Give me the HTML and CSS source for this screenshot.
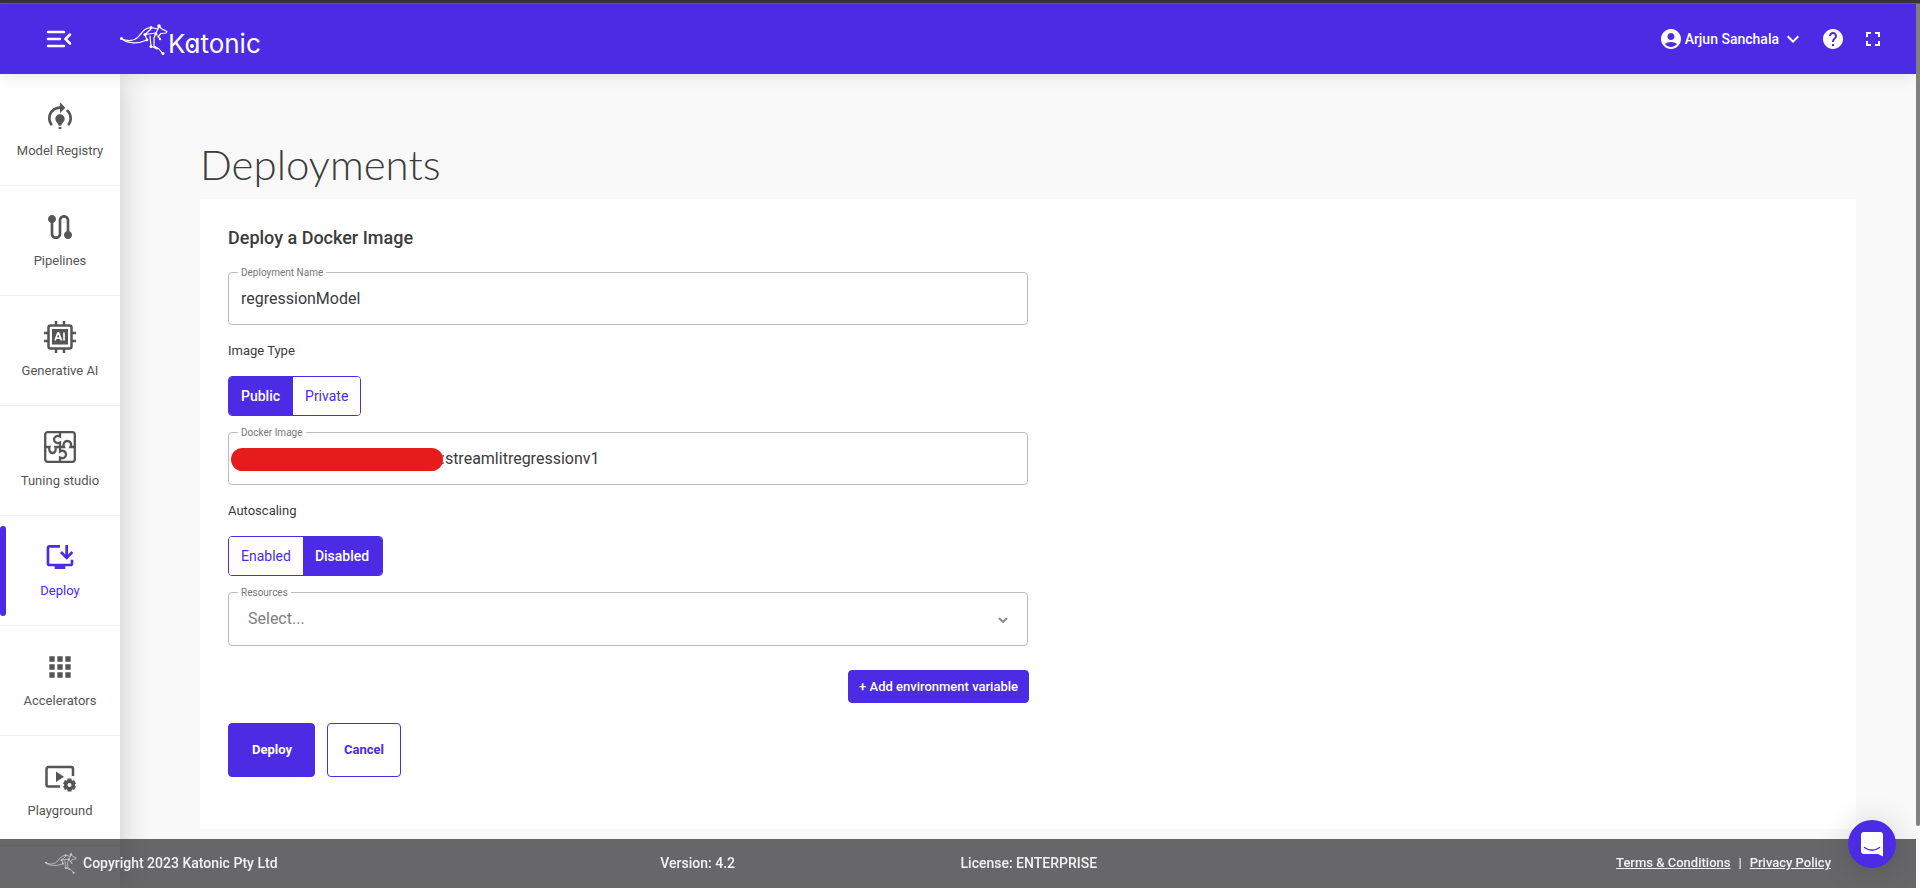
FILE: index.html
```html
<!DOCTYPE html>
<html lang="en">
<head>
<meta charset="utf-8">
<meta name="viewport" content="width=device-width, initial-scale=1">
<title>Katonic - Deployments</title>
<link rel="stylesheet" href="styles.css">
</head>
<body>
<svg class="defs" aria-hidden="true">
  <symbol id="kangaroo" viewBox="0 0 48 32">
    <g fill="none" stroke="currentColor" stroke-width="1.200" stroke-linecap="round" stroke-linejoin="round">
      <path d="M1 15.500C8 19 15 18 19 13S25 5 31 4.500L38 6"/>
      <path d="M1 15.500C8 21 18 21 27 17"/>
      <path d="M36 10L25 11.500L27 17M25 11.500L31 6"/>
      <path d="M36 10L39 3.500L42 6L47 8.500L46 10L41 10.500L38 14"/>
      <path d="M36 10L34 15L34 23L39 26L43 31M30 13L31 23L37 26M38 13L40 16"/>
    </g>
    <g fill="currentColor"><circle cx="1.500" cy="15.500" r="1.500"/><circle cx="31" cy="4.500" r="1.500"/><circle cx="39" cy="3" r="1.800"/><circle cx="25" cy="11.500" r="1.600"/><circle cx="27" cy="17" r="1.400"/><circle cx="36" cy="11" r="1.500"/><circle cx="31" cy="23.500" r="1.500"/><circle cx="43" cy="30.500" r="1.500"/><circle cx="40" cy="16" r="1.200"/></g>
  </symbol>
</svg>
<div class="window-edge"></div>
<header class="topbar">
  <button class="icon-button menu" type="button" aria-label="Collapse menu">
    <svg width="28" height="24" viewBox="0 0 28 24" fill="none" stroke="currentColor" stroke-width="2.500" stroke-linecap="round"><path d="M3 5H19M3 12H15M3 19H19"/><path d="M25 7.500L20.500 12L25 16.500"/></svg>
  </button>
  <a class="brand" href="#" aria-label="Katonic home">
    <svg class="brand-mark" width="48" height="32"><use href="#kangaroo"/></svg>
    <span class="brand-name">K<span class="brand-a">a</span>tonic</span>
  </a>
  <div class="tools">
    <button class="user" type="button">
      <svg width="24" height="24" viewBox="0 0 24 24" fill="currentColor"><path d="M12 2C6.480 2 2 6.480 2 12s4.480 10 10 10 10-4.480 10-10S17.520 2 12 2zm0 4c1.930 0 3.500 1.570 3.500 3.500S13.930 13 12 13s-3.500-1.570-3.500-3.500S10.070 6 12 6zm0 14c-2.030 0-4.430-.82-6.140-2.880C7.550 15.800 9.680 15 12 15s4.450.8 6.140 2.120C16.430 19.180 14.030 20 12 20z"/></svg>
      <span>Arjun Sanchala</span>
      <svg width="24" height="24" viewBox="0 0 24 24" fill="currentColor"><path d="M7.410 8.590 12 13.170l4.590-4.580L18 10l-6 6-6-6 1.410-1.410z"/></svg>
    </button>
    <button class="icon-button" type="button" aria-label="Help">
      <svg width="24" height="24" viewBox="0 0 24 24" fill="currentColor"><path d="M12 2C6.480 2 2 6.480 2 12s4.480 10 10 10 10-4.480 10-10S17.520 2 12 2zm1 17h-2v-2h2v2zm2.070-7.750-.9.920C13.450 12.900 13 13.500 13 15h-2v-.5c0-1.100.45-2.100 1.170-2.830l1.240-1.260c.37-.36.59-.86.59-1.410 0-1.100-.9-2-2-2s-2 .9-2 2H8c0-2.210 1.790-4 4-4s4 1.790 4 4c0 .88-.36 1.680-.93 2.250z"/></svg>
    </button>
    <button class="icon-button" type="button" aria-label="Full screen">
      <svg width="24" height="24" viewBox="0 0 24 24" fill="currentColor"><path d="M7 14H5v5h5v-2H7v-3zm-2-4h2V7h3V5H5v5zm12 7h-3v2h5v-5h-2v3zM14 5v2h3v3h2V5h-5z"/></svg>
    </button>
  </div>
</header>

<div class="shell">
  <nav class="sidebar" aria-label="Main">
    <a class="nav-item" href="#">
      <svg viewBox="0 0 24 24" fill="currentColor"><path d="M15.500 13.500c0 2-2.500 3.500-2.500 5h-2c0-1.500-2.500-3-2.500-5 0-1.930 1.570-3.500 3.500-3.500s3.500 1.570 3.500 3.500zm-2.500 6h-2V21h2v-1.500zm6-6.500c0 1.680-.59 3.210-1.580 4.420l1.420 1.420C20.180 17.270 21 15.230 21 13c0-2.740-1.230-5.190-3.160-6.840l-1.420 1.420C17.990 8.860 19 10.820 19 13zm-3-8-4-4v3c-4.970 0-9 4.030-9 9 0 2.230.82 4.270 2.160 5.840l1.420-1.420C5.590 16.210 5 14.680 5 13c0-3.860 3.140-7 7-7v3l4-4z"/></svg>
      <span>Model Registry</span>
    </a>
    <a class="nav-item" href="#">
      <svg viewBox="0 0 24 24" fill="currentColor"><path d="M19 15.180V7c0-2.210-1.790-4-4-4s-4 1.790-4 4v10c0 1.100-.9 2-2 2s-2-.9-2-2V8.820C8.160 8.400 9 7.300 9 6c0-1.660-1.340-3-3-3S3 4.340 3 6c0 1.300.84 2.400 2 2.820V17c0 2.210 1.790 4 4 4s4-1.790 4-4V7c0-1.100.9-2 2-2s2 .9 2 2v8.180c-1.160.41-2 1.510-2 2.820 0 1.660 1.340 3 3 3s3-1.340 3-3c0-1.300-.84-2.400-2-2.820z"/></svg>
      <span>Pipelines</span>
    </a>
    <a class="nav-item" href="#">
      <svg viewBox="0 0 32 32" fill="none" stroke="currentColor" stroke-width="2"><rect x="4.500" y="4.500" width="23" height="23" rx="2" stroke-width="2.500"/><path d="M12 0V4M20 0V4M12 28V32M20 28V32M0 12H4M0 20H4M28 12H32M28 20H32" stroke-width="2.500"/><rect x="8" y="8" width="16" height="15.500" fill="currentColor" stroke="none"/><path d="M11 19.500L13.800 12H14.700L17.500 19.500M12.200 17.200H16.300M20 11.500V19.500" stroke="#fff" stroke-width="1.700"/></svg>
      <span>Generative AI</span>
    </a>
    <a class="nav-item" href="#">
      <svg viewBox="0 0 32 32" fill="none" stroke="currentColor" stroke-width="2.300"><rect x="1.200" y="1.200" width="29.600" height="29.600" rx="2.500"/><path d="M16 1V5.500C13 4 10 6 10 8.500S13 13 16 11.500V20.500C19 18.500 22 20.500 22 23.500S19 28 16 26.500V31M1 16H5.500C4.500 19 6 22 8.500 22S12.500 19 11.500 16H20C18.500 13 20.500 10 23.500 10S28 13 26.500 16H31"/></svg>
      <span>Tuning studio</span>
    </a>
    <a class="nav-item active" href="#" aria-current="page">
      <svg viewBox="0 0 24 24" fill="currentColor"><path d="M20 17H4V5h8V3H4c-1.110 0-2 .89-2 2v12c0 1.100.89 2 2 2h4v2h8v-2h4c1.100 0 2-.9 2-2v-3h-2v3z"/><path d="M17 14l5-5-1.410-1.410L18 10.170V3h-2v7.170l-2.590-2.580L12 9z"/></svg>
      <span>Deploy</span>
    </a>
    <a class="nav-item" href="#">
      <svg viewBox="0 0 24 24" fill="currentColor"><path d="M4 8h4V4H4v4zm6 12h4v-4h-4v4zm-6 0h4v-4H4v4zm0-6h4v-4H4v4zm6 0h4v-4h-4v4zm6-10v4h4V4h-4zm-6 4h4V4h-4v4zm6 6h4v-4h-4v4zm0 6h4v-4h-4v4z"/></svg>
      <span>Accelerators</span>
    </a>
    <a class="nav-item" href="#">
      <svg viewBox="0 0 32 32" fill="none" stroke="currentColor" stroke-width="2.500"><path d="M16 25.500H4.500A2 2 0 0 1 2.500 23.500V8A2 2 0 0 1 4.500 6H27A2 2 0 0 1 29 8V15"/><path d="M12 10.500L20 15.800L12 21Z" fill="currentColor" stroke="none"/><circle cx="25.500" cy="24" r="3.700" stroke-width="3.400"/><g stroke-width="4"><path d="M25.500 17.500V20M25.500 28V30.500M20 20.800L22 22M29 26L31 27.200M20 27.200L22 26M29 22L31 20.800"/></g></svg>
      <span>Playground</span>
    </a>
  </nav>

  <main class="content">
    <h1>Deployments</h1>
    <form class="card">
      <h2>Deploy a Docker Image</h2>
      <div class="field">
        <label for="name">Deployment Name</label>
        <input id="name" type="text" value="regressionModel">
      </div>
      <p class="caption" id="image-type">Image Type</p>
      <div class="toggle" role="group" aria-labelledby="image-type">
        <button type="button" aria-pressed="true">Public</button>
        <button type="button" aria-pressed="false">Private</button>
      </div>
      <div class="field redacted">
        <label for="image">Docker Image</label>
        <input id="image" type="text" value=":streamlitregressionv1">
        <span class="redaction"></span>
      </div>
      <p class="caption" id="autoscaling">Autoscaling</p>
      <div class="toggle" role="group" aria-labelledby="autoscaling">
        <button type="button" aria-pressed="false">Enabled</button>
        <button type="button" aria-pressed="true">Disabled</button>
      </div>
      <div class="field">
        <label for="resources">Resources</label>
        <select id="resources"><option>Select...</option></select>
        <svg class="caret" width="10" height="6" viewBox="0 0 10 6" fill="none" stroke="currentColor" stroke-width="2"><path d="M1 1L5 5L9 1"/></svg>
      </div>
      <div class="add-row"><button class="add" type="button">+ Add environment variable</button></div>
      <div class="actions">
        <button class="submit" type="submit">Deploy</button>
        <button class="cancel" type="button">Cancel</button>
      </div>
    </form>
  </main>
</div>

<footer class="footer">
  <div class="copyright"><svg width="32" height="22"><use href="#kangaroo"/></svg><span>Copyright 2023 Katonic Pty Ltd</span></div>
  <span>Version: 4.2</span>
  <span>License: ENTERPRISE</span>
  <div class="legal"><a href="#">Terms &amp; Conditions</a><span>|</span><a href="#">Privacy Policy</a></div>
</footer>
<button class="chat" type="button" aria-label="Open chat">
  <svg width="22" height="25" viewBox="0 0 22 25"><path d="M3 0H19A3 3 0 0 1 22 3V24.500L17 22H3A3 3 0 0 1 0 19V3A3 3 0 0 1 3 0Z" fill="#fff"/><path d="M3.500 15.500Q11 21 18.500 15.500" fill="none" stroke="#4b2be3" stroke-width="1.400" stroke-linecap="round"/></svg>
</button>
<div class="scroll-track"><div class="scroll-thumb"></div></div>
</body>
</html>
```
FILE: styles.css
```css
:root {
  --purple: #4b2be3;
  --ink: #3b3b3d;
  --grey: #555;
}

* { box-sizing: border-box; }

body {
  margin: 0;
  padding-right: 4px;
  min-height: 100vh;
  display: flex;
  flex-direction: column;
  background: #f9f9f9;
  color: var(--ink);
  font-family: Roboto, "Liberation Sans", sans-serif;
  font-size: 14px;
}

button, input, select { font: inherit; }
button { cursor: pointer; }
a { color: inherit; }

.defs { position: absolute; width: 0; height: 0; }

.window-edge {
  height: 4px;
  margin-right: -4px;
  background: #363639;
  border-bottom: 1px solid #626262;
}

.topbar {
  position: relative;
  z-index: 2;
  display: flex;
  align-items: center;
  height: 70px;
  padding: 0 31px 0 45px;
  background: var(--purple);
  color: #fff;
  box-shadow: 0 2px 16px rgba(0, 0, 0, 0.1);
}

.icon-button, .user {
  display: flex;
  align-items: center;
  padding: 0;
  border: 0;
  background: none;
  color: inherit;
}

.brand {
  display: flex;
  align-items: center;
  margin-left: 47px;
  text-decoration: none;
}

.brand-name {
  margin-top: 10px;
  font: 400 26px/32px Inter, Lato, sans-serif;
  font-feature-settings: "cv11";
}

.brand-a { position: relative; }

.brand-a::after {
  content: "";
  position: absolute;
  left: 6px;
  top: 16px;
  width: 4px;
  height: 4px;
  border-radius: 50%;
  background: #fff;
}

.tools {
  display: flex;
  align-items: center;
  gap: 16px;
  margin-left: auto;
}

.user { gap: 2px; font-weight: 500; }

.shell { flex: 1; display: flex; }

.sidebar {
  flex: 0 0 120px;
  padding-top: 2px;
  background: #fff;
  box-shadow: 0 0 30px rgba(0, 0, 0, 0.2);
}

.nav-item {
  position: relative;
  display: flex;
  flex-direction: column;
  align-items: center;
  gap: 10px;
  height: 110px;
  padding-top: 25px;
  border-bottom: 1px solid #f0f0f0;
  color: var(--grey);
  font-size: 13px;
  line-height: 16px;
  text-decoration: none;
}

.nav-item svg { width: 32px; height: 32px; }

.nav-item.active { color: var(--purple); }

.nav-item.active::before {
  content: "";
  position: absolute;
  left: 0;
  top: 10px;
  bottom: 9px;
  width: 6px;
  border-radius: 3px;
  background: var(--purple);
}

.content { flex: 1; padding: 64px 60px 59px 80px; }

h1 {
  margin: 0;
  font: 300 42px/52px Lato, sans-serif;
  padding-bottom: 9px;
}

.card {
  padding: 27px 28px 52px;
  background: #fff;
}

h2 {
  margin: 0 0 22px;
  font-size: 18px;
  line-height: 24px;
  font-weight: 500;
}

.field { position: relative; max-width: 800px; }

.field label {
  position: absolute;
  left: 10px;
  top: -5px;
  padding: 0 3px;
  background: #fff;
  color: #777;
  font-size: 10px;
  line-height: 12px;
}

.field input, .field select {
  display: block;
  width: 100%;
  height: 53px;
  padding: 0 12px;
  border: 1px solid #bdbdbd;
  border-radius: 4px;
  background: none;
  color: var(--ink);
  font-size: 16px;
}

.field select {
  appearance: none;
  height: 54px;
  padding: 0 19px 2px;
  color: #808080;
}

.redacted input { padding-left: 212px; }

.redaction {
  position: absolute;
  left: 3px;
  top: 16px;
  width: 212px;
  height: 23px;
  border-radius: 12px;
  background: #e61c1c;
}

.caret {
  position: absolute;
  right: 20px;
  top: 25px;
  color: #8a8a8a;
}

.caption {
  margin: 18px 0;
  font-size: 13px;
  line-height: 15px;
}

.toggle {
  display: flex;
  width: fit-content;
  margin-bottom: 16px;
  border: 1px solid var(--purple);
  border-radius: 4px;
  overflow: hidden;
}

.toggle button {
  height: 38px;
  padding: 0 12px;
  border: 0;
  background: #fff;
  color: var(--purple);
}

.toggle button[aria-pressed="true"] {
  padding-right: 13px;
  background: var(--purple);
  color: #fff;
  font-weight: 500;
}

.add-row {
  display: flex;
  justify-content: flex-end;
  max-width: 801px;
  margin: 24px 0 20px;
}

.add, .submit, .cancel {
  border: 1px solid var(--purple);
  border-radius: 4px;
  background: var(--purple);
  color: #fff;
  font-size: 13px;
  font-weight: 500;
}

.add { height: 33px; padding: 0 10px; }

.actions { display: flex; gap: 12px; }

.submit { height: 54px; padding: 0 22px 2px 23px; font-weight: 700; }

.cancel {
  height: 54px;
  padding: 0 16px 2px;
  background: #fff;
  color: var(--purple);
  font-weight: 700;
}

.footer {
  position: fixed;
  z-index: 3;
  left: 0;
  right: 4px;
  bottom: 0;
  display: grid;
  grid-template-columns: 41fr 20fr 29fr 29fr;
  align-items: center;
  height: 49px;
  padding: 0 85px 2px 45px;
  background: rgba(25, 25, 28, 0.65);
  color: #f2f2f2;
  font-weight: 500;
}

.copyright { display: flex; align-items: center; gap: 6px; }
.copyright svg { color: #ccc; }

.legal {
  display: flex;
  justify-content: flex-end;
  gap: 8px;
  font-size: 13px;
}

.chat {
  position: fixed;
  z-index: 4;
  right: 24px;
  bottom: 20px;
  display: flex;
  align-items: center;
  justify-content: center;
  width: 48px;
  height: 48px;
  padding: 0;
  border: 0;
  border-radius: 50%;
  background: var(--purple);
  box-shadow: 0 2px 32px rgba(0, 0, 0, 0.16);
}

.scroll-track {
  position: fixed;
  z-index: 3;
  top: 4px;
  right: 0;
  bottom: 0;
  width: 4px;
  background: #f9f9f9;
}

.scroll-thumb {
  height: 93%;
  border-radius: 0 0 2px 2px;
  background: #808080;
}
```
